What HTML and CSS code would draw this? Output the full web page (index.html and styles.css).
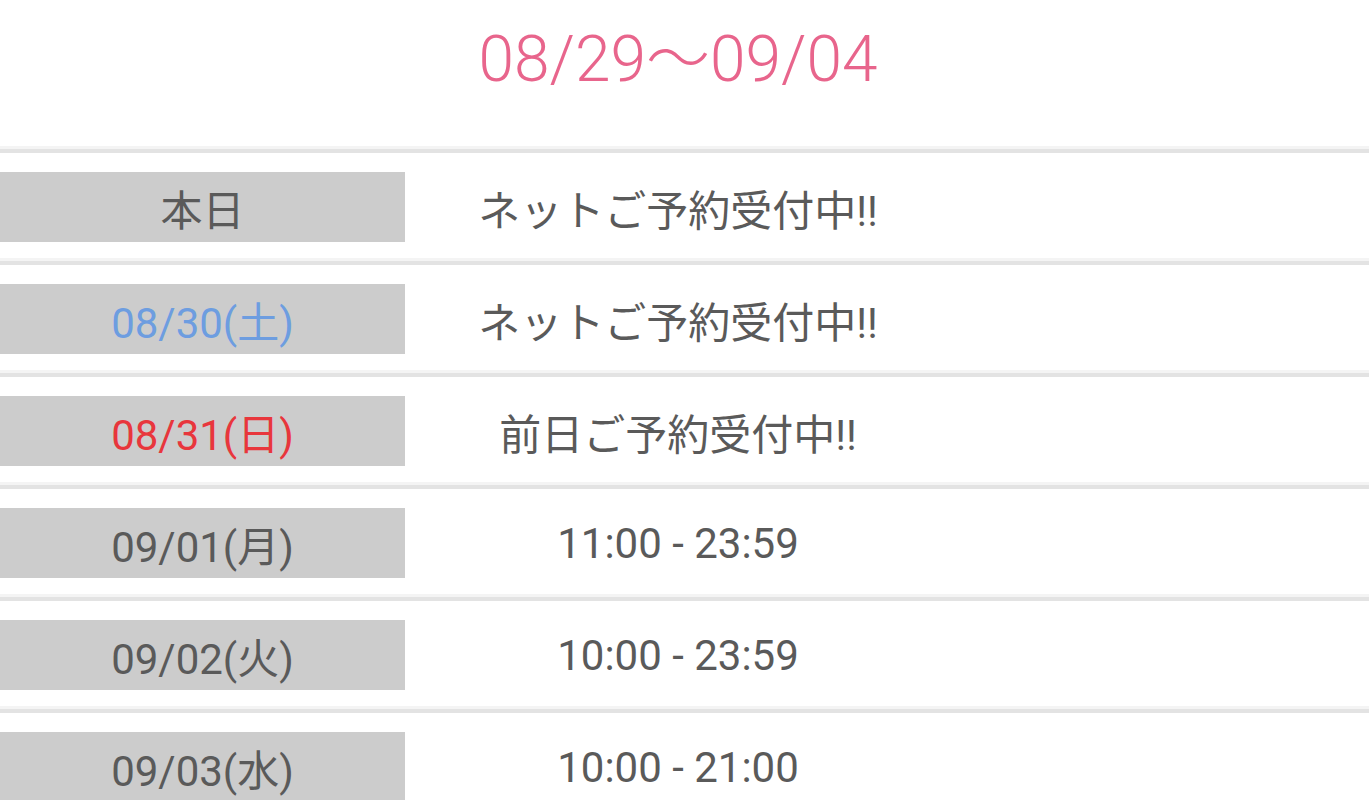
FILE: index.html
```html
<!DOCTYPE html>
<html>

<head>
  <title>営業時間</title>
  <link rel="stylesheet" href="styles.css">
</head>

<body>
  <div class="week">
    <h1 class="week-title">08/29〜09/04</h1>

    <ul class="days">
      <li class="day">
        <div class="date">本日</div>
        <div class="hours">ネットご予約受付中!!</div>
      </li>
      <li class="day">
        <div class="date sat">08/30(土)</div>
        <div class="hours">ネットご予約受付中!!</div>
      </li>
      <li class="day">
        <div class="date sun">08/31(日)</div>
        <div class="hours">前日ご予約受付中!!</div>
      </li>
      <li class="day">
        <div class="date">09/01(月)</div>
        <div class="hours">11:00 - 23:59</div>
      </li>
      <li class="day">
        <div class="date">09/02(火)</div>
        <div class="hours">10:00 - 23:59</div>
      </li>
      <li class="day">
        <div class="date">09/03(水)</div>
        <div class="hours">10:00 - 21:00</div>
      </li>
      <li class="day">
        <div class="date">09/04(木)</div>
        <div class="hours">10:00 - 21:00</div>
      </li>
    </ul>
  </div>
</body>

</html>
```

FILE: styles.css
```css
body {
  font-family: Roboto, "Noto Sans CJK JP", sans-serif;
  margin: 0;
  color: #5a5a5a;
  background: #ffffff;
}

.week-title {
  margin: 0;
  height: 149px;
  padding: 18px 13px 0 0;
  box-sizing: border-box;
  text-align: center;
  font-size: 64px;
  font-weight: 300;
  line-height: 84px;
  color: #e8658c;
}

.days {
  list-style: none;
  margin: 0;
  padding: 0;
}

.day {
  display: flex;
  align-items: center;
  padding: 19px 0;
  border-top: 4px solid #e3e3e3;
  box-shadow: 0 -3px 0 #f4f4f4;
}

.date {
  width: 405px;
  height: 70px;
  display: flex;
  align-items: center;
  justify-content: center;
  background: #cccccc;
  font-size: 42px;
}

.hours {
  width: 546px;
  text-align: center;
  font-size: 42px;
}

.sat {
  color: #6d9de0;
}

.sun {
  color: #e8363c;
}
```
